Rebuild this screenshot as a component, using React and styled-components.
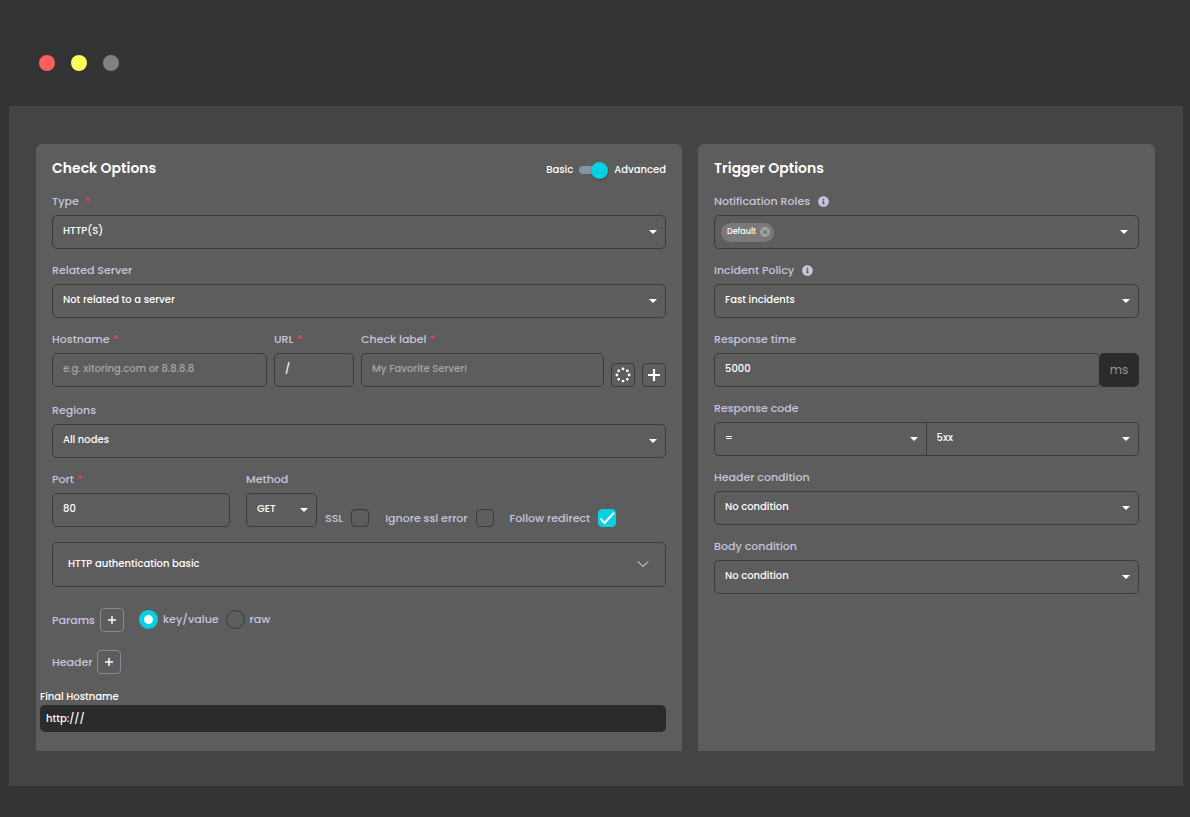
import React, { useState } from 'react';
import styled, { createGlobalStyle } from 'styled-components';
import { FaInfoCircle } from 'react-icons/fa';

const GlobalStyle = createGlobalStyle`
* {
    box-sizing: border-box;
}
body {
    margin: 0;
    background: #333333;
    color: #ffffff;
    font: 500 10px/16px Poppins, Inter, sans-serif;
}
input, select, button {
    margin: 0;
    color: inherit;
    font: inherit;
}
`

const Window = styled.div`
padding: 0 7px 31px 9px;
`
const TitleBar = styled.div`
display: flex;
align-items: center;
gap: 16px;
height: 106px;
padding: 20px 30px 0;
`
const Dot = styled.span`
width: 16px;
height: 16px;
border-radius: 50%;
background: ${props => props.$color};
`
const Content = styled.main`
display: grid;
grid-template-columns: 646fr 457fr;
gap: 16px;
padding: 38px 28px 35px 27px;
background: #444444;
`
const Card = styled.section`
display: flex;
flex-direction: column;
gap: 13px;
padding: 12px 16px 19px;
border-radius: 6px 6px 0 0;
background: #5d5d5d;
`
const CardHeader = styled.header`
display: flex;
justify-content: space-between;
height: 24px;
`
const Title = styled.h2`
margin: 0;
font-size: 14px;
font-weight: 600;
line-height: 24px;
`
const ToggleRow = styled.div`
display: flex;
align-items: center;
align-self: flex-end;
gap: 6px;
height: 20px;
`
const Switch = styled.input`
display: flex;
align-items: center;
justify-content: flex-end;
appearance: none;
width: 29px;
height: 8px;
border-radius: 4px;
background: #8594a4;
&::before {
    content: '';
    flex: none;
    width: 17px;
    height: 17px;
    border-radius: 50%;
    background: #06d1e0;
    box-shadow: 0 1px 2px rgba(0, 0, 0, 0.3);
}
&:not(:checked) {
    justify-content: flex-start;
}
`
const Field = styled.div`
display: flex;
flex-direction: column;
gap: 6px;
min-width: 0;
width: ${props => props.$width || 'auto'};
`
const Label = styled.label`
display: flex;
align-items: center;
gap: ${props => props.$gap || '3px'};
color: #c8c5dd;
font-size: 11px;
svg {
    width: 11px;
    height: 11px;
}
`
const Star = styled.span`
color: #f0385e;
`
const Input = styled.input`
width: 100%;
min-width: 0;
height: 34px;
padding: 0 10px 2px;
border: 1px solid #3a3a3a;
border-radius: 5px;
outline: none;
background: transparent;
&::placeholder {
    color: #a6a6a6;
    opacity: 1;
}
`
const SelectWrap = styled.div`
display: grid;
align-items: center;
flex: 1;
& > * {
    grid-area: 1 / 1;
}
& + & select {
    border-left: 0;
}
`
const NativeSelect = styled(Input).attrs({ as: 'select' })`
appearance: none;
border-radius: ${props => props.$radius || '5px'};
option {
    background: #444444;
}
`
const Caret = styled.span`
justify-self: end;
margin-right: 9px;
border: 4px solid transparent;
border-top-color: #ffffff;
border-bottom: 0;
pointer-events: none;
`
const TagBox = styled.div`
display: flex;
align-items: center;
height: 34px;
padding: 0 1px 0 6px;
border: 1px solid #3a3a3a;
border-radius: 5px;
`
const Tag = styled.span`
display: flex;
align-items: center;
gap: 4px;
height: 19px;
padding: 0 4px 0 6px;
border-radius: 10px;
background: #7a7a7a;
font-size: 8px;
`
const TagRemove = styled.button`
display: flex;
padding: 0;
border: 0;
background: none;
`
const TagInput = styled.input`
flex: 1;
min-width: 0;
border: 0;
outline: none;
background: transparent;
`
const HostRow = styled.div`
display: grid;
grid-template-columns: 215fr 80fr 243fr 24px 24px;
align-items: end;
gap: 7px;
padding-bottom: 2px;
`
const PortRow = styled.div`
display: flex;
align-items: flex-end;
gap: 16px;
`
const Checks = styled.div`
display: flex;
gap: 16px;
margin-left: -8px;
`
const CheckLabel = styled.label`
display: flex;
align-items: center;
gap: 8px;
color: #c8c5dd;
font-size: 11px;
white-space: nowrap;
`
const CheckWrap = styled.span`
display: grid;
& > * {
    grid-area: 1 / 1;
}
svg {
    pointer-events: none;
}
`
const CheckInput = styled.input`
appearance: none;
width: 18px;
height: 18px;
border: 1px solid #3a3a3a;
border-radius: 4px;
&:checked {
    border-color: #06d1e0;
    background: #06d1e0;
}
`
const RadioInput = styled.input`
appearance: none;
width: 19px;
height: 19px;
border: 1px solid #3a3a3a;
border-radius: 50%;
&:checked {
    border: 5px solid #06d1e0;
    background: #ffffff;
}
`
const IconButton = styled.button`
display: flex;
align-items: center;
justify-content: center;
width: 24px;
height: 24px;
padding: 0;
border: 1px solid ${props => props.$light ? '#8a8894' : '#3a3a3a'};
border-radius: 4px;
background: transparent;
`
const Accordion = styled.button`
display: flex;
align-items: center;
justify-content: space-between;
height: 45px;
margin-top: 2px;
padding: 0 16px 2px 15px;
border: 1px solid #3a3a3a;
border-radius: 5px;
background: transparent;
`
const OptionRow = styled.div`
display: flex;
align-items: center;
gap: 5px;
color: #c8c5dd;
font-size: 11px;
`
const Options = styled.div`
display: flex;
flex-direction: column;
gap: 18px;
padding-top: 8px;
`
const RadioGroup = styled.div`
display: flex;
gap: 7px;
margin-left: 10px;
padding-bottom: 2px;
label {
    gap: 5px;
}
`
const Final = styled.div`
display: flex;
flex-direction: column;
margin: 2px 0 0 -12px;
`
const FinalInput = styled.input`
height: 27px;
padding: 0 6px;
border: 0;
border-radius: 5px;
background: #2b2b2b;
`
const Group = styled.div`
display: flex;
`
const Unit = styled.span`
display: flex;
align-items: center;
justify-content: center;
flex: none;
width: 40px;
margin-left: -1px;
border-radius: 5px;
background: #2b2b2b;
color: #96949f;
font-size: 12px;
font-weight: 400;
`

const Select = ({ id, value, radius, label }) => (
    <SelectWrap>
        <NativeSelect id={id} $radius={radius} aria-label={label}>
            <option>{value}</option>
        </NativeSelect>
        <Caret />
    </SelectWrap>
)

const SelectField = ({ id, label, value, required, info, gap, width }) => (
    <Field $width={width}>
        <Label htmlFor={id} $gap={gap}>
            {label}
            {required && <Star>*</Star>}
            {info && <FaInfoCircle />}
        </Label>
        <Select id={id} value={value} />
    </Field>
)

const InputField = ({ id, label, required, width, ...rest }) => (
    <Field $width={width}>
        <Label htmlFor={id}>
            {label}
            {required && <Star>*</Star>}
        </Label>
        <Input id={id} {...rest} />
    </Field>
)

const Check = ({ label, defaultChecked }) => {
    const [checked, setChecked] = useState(!!defaultChecked)
    return (
        <CheckLabel>
            {label}
            <CheckWrap>
                <CheckInput type="checkbox" checked={checked} onChange={() => setChecked(!checked)} />
                {checked && (
                    <svg width="18" height="18" viewBox="0 0 18 18" fill="none" stroke="#fff" strokeWidth="2">
                        <path d="M2.2 9.6 6.6 14 16 3.6" />
                    </svg>
                )}
            </CheckWrap>
        </CheckLabel>
    )
}

const Plus = ({ size }) => (
    <svg width={size} height={size} viewBox="0 0 12 12" stroke="#fff" strokeWidth="2.2">
        <path d="M6 0v12M0 6h12" />
    </svg>
)

const Dots = () => (
    <svg width="16" height="16" viewBox="0 0 16 16" fill="#fff">
        {[0, 1, 2, 3, 4, 5, 6, 7].map(i => (
            <circle key={i} cx="8" cy="1.9" r="1.4" transform={'rotate(' + i * 45 + ' 8 8)'} />
        ))}
    </svg>
)

const CheckOptions = () => (
    <Card>
        <CardHeader>
            <Title>Check Options</Title>
            <ToggleRow>
                <span>Basic</span>
                <Switch type="checkbox" role="switch" aria-label="Advanced" defaultChecked />
                <span>Advanced</span>
            </ToggleRow>
        </CardHeader>
        <SelectField id="type" label="Type" value="HTTP(S)" required gap="6px" />
        <SelectField id="server" label="Related Server" value="Not related to a server" />
        <HostRow>
            <InputField id="hostname" label="Hostname" required placeholder="e.g. xitoring.com or 8.8.8.8" />
            <InputField id="url" label="URL" required defaultValue="/" />
            <InputField id="label" label="Check label" required placeholder="My Favorite Server!" />
            <IconButton type="button" aria-label="Test"><Dots /></IconButton>
            <IconButton type="button" aria-label="Add"><Plus size={12} /></IconButton>
        </HostRow>
        <SelectField id="regions" label="Regions" value="All nodes" />
        <PortRow>
            <InputField id="port" label="Port" required width="29%" defaultValue="80" />
            <SelectField id="method" label="Method" value="GET" width="71px" />
            <Checks>
                <Check label="SSL" />
                <Check label="Ignore ssl error" />
                <Check label="Follow redirect" defaultChecked />
            </Checks>
        </PortRow>
        <Accordion type="button" aria-expanded="false">
            HTTP authentication basic
            <svg width="12" height="8" viewBox="0 0 12 8" fill="none" stroke="#fff">
                <path d="M1 1.5 6 6.5 11 1.5" />
            </svg>
        </Accordion>
        <Options>
            <OptionRow>
                Params
                <IconButton type="button" $light aria-label="Add param"><Plus size={8} /></IconButton>
                <RadioGroup>
                    <CheckLabel>
                        <RadioInput type="radio" name="params" defaultChecked />
                        key/value
                    </CheckLabel>
                    <CheckLabel>
                        <RadioInput type="radio" name="params" />
                        raw
                    </CheckLabel>
                </RadioGroup>
            </OptionRow>
            <OptionRow>
                Header
                <IconButton type="button" $light aria-label="Add header"><Plus size={8} /></IconButton>
            </OptionRow>
        </Options>
        <Final>
            <label htmlFor="final">Final Hostname</label>
            <FinalInput id="final" readOnly value="http:///" />
        </Final>
    </Card>
)

const TriggerOptions = () => (
    <Card>
        <CardHeader>
            <Title>Trigger Options</Title>
        </CardHeader>
        <Field>
            <Label htmlFor="roles" $gap="8px">
                Notification Roles
                <FaInfoCircle />
            </Label>
            <TagBox>
                <Tag>
                    Default
                    <TagRemove type="button" aria-label="Remove Default">
                        <svg width="10" height="10" viewBox="0 0 10 10" stroke="#5d5d5d">
                            <circle cx="5" cy="5" r="5" fill="#a0a0a0" stroke="none" />
                            <path d="M3 3 7 7M7 3 3 7" />
                        </svg>
                    </TagRemove>
                </Tag>
                <TagInput id="roles" />
                <Caret />
            </TagBox>
        </Field>
        <SelectField id="policy" label="Incident Policy" value="Fast incidents" info gap="8px" />
        <Field>
            <Label htmlFor="time">Response time</Label>
            <Group>
                <Input id="time" defaultValue="5000" />
                <Unit>ms</Unit>
            </Group>
        </Field>
        <Field>
            <Label htmlFor="code">Response code</Label>
            <Group>
                <Select id="code" value="=" radius="5px 0 0 5px" />
                <Select value="5xx" radius="0 5px 5px 0" label="Response code value" />
            </Group>
        </Field>
        <SelectField id="header" label="Header condition" value="No condition" />
        <SelectField id="body" label="Body condition" value="No condition" />
    </Card>
)

export default function App() {
    return (
        <>
            <GlobalStyle />
            <Window>
                <TitleBar>
                    <Dot $color="#ff5f5f" />
                    <Dot $color="#ffff5c" />
                    <Dot $color="#808080" />
                </TitleBar>
                <Content>
                    <CheckOptions />
                    <TriggerOptions />
                </Content>
            </Window>
        </>
    );
}
